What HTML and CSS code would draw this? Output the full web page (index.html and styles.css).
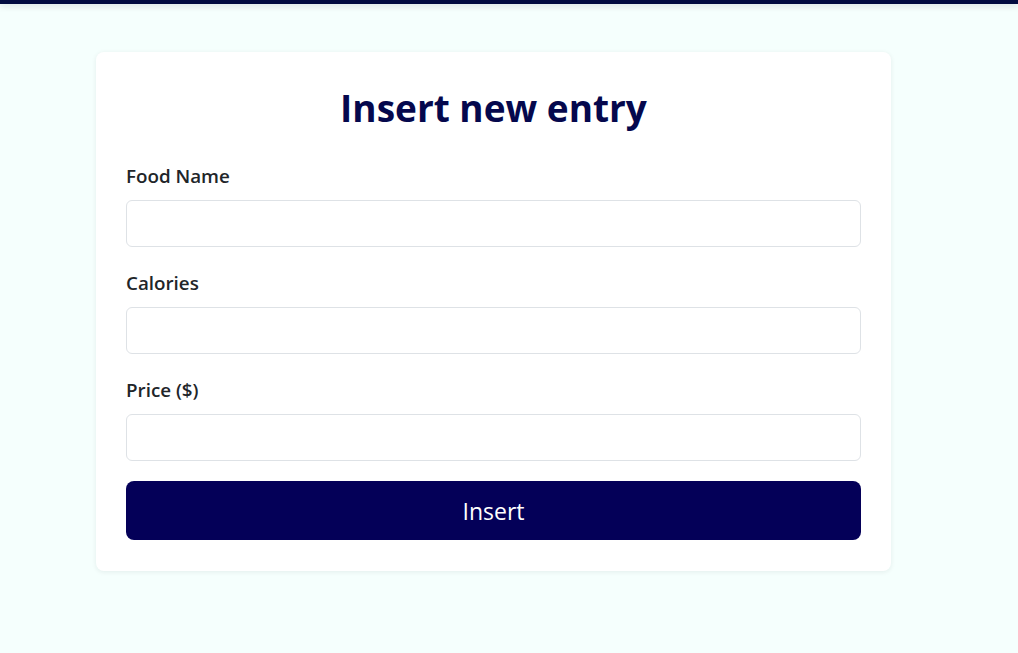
FILE: index.html
```html
<!DOCTYPE html>
<html lang="en">
<head>
<meta charset="utf-8">
<title>Insert new entry</title>
<link rel="stylesheet" href="styles.css">
</head>
<body>
<div class="topbar"></div>
<main class="page">
  <form class="card">
    <h1 class="title">Insert new entry</h1>
    <div class="group">
      <label class="label" for="name">Food Name</label>
      <input class="input" id="name" type="text">
    </div>
    <div class="group">
      <label class="label" for="cal">Calories</label>
      <input class="input" id="cal" type="text">
    </div>
    <div class="group last">
      <label class="label" for="price">Price ($)</label>
      <input class="input" id="price" type="text">
    </div>
    <button class="btn" type="button">Insert</button>
  </form>
</main>
</body>
</html>
```
FILE: styles.css
```css
* { box-sizing: border-box; }
html, body { margin: 0; padding: 0; }
body {
  background: #f5fffd;
  font-family: "Open Sans", "Noto Sans", sans-serif;
  color: #212529;
  min-height: 653px;
}
.topbar {
  height: 4px;
  background: #010b40;
  box-shadow: 0 2px 6px rgba(0, 20, 40, 0.15);
}
.page {
  padding: 48px 0 0 96px;
}
.card {
  width: 795px;
  background: #ffffff;
  border-radius: 8px;
  box-shadow: 0 1px 5px rgba(0, 40, 40, 0.08);
  padding: 30px 30px 31px 30px;
  display: flex;
  flex-direction: column;
}
.title {
  margin: 2px 0 32px 0;
  text-align: center;
  font-size: 37px;
  line-height: 48px;
  font-weight: 700;
  color: #05084d;
}
.group {
  display: flex;
  flex-direction: column;
  margin-bottom: 24px;
}
.group.last { margin-bottom: 20px; }
.label {
  font-size: 18.8px;
  line-height: 24px;
  font-weight: 600;
  margin-bottom: 12px;
  color: #212529;
}
.input {
  height: 47px;
  border: 1px solid #dee2e6;
  border-radius: 6px;
  background: #fff;
  font: inherit;
  padding: 0 12px;
}
.btn {
  height: 59px;
  border: none;
  border-radius: 8px;
  background: #040058;
  color: #ffffff;
  font-family: inherit;
  font-size: 23px;
  font-weight: 400;
}
```
